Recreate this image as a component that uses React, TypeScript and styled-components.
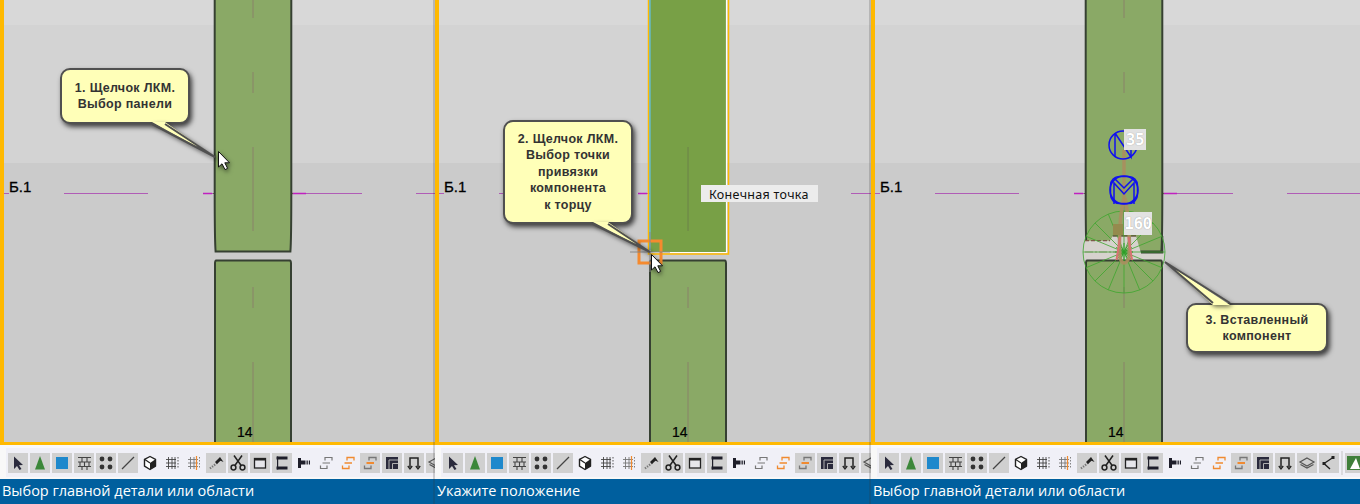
import React from "react";
import styled, { createGlobalStyle } from "styled-components";

const Global = createGlobalStyle`
  html, body { margin: 0; padding: 0; background: #cbcbcb; }
  #root { width: 1360px; height: 504px; overflow: hidden; }
`;

const Page = styled.div`
  display: flex;
  width: 1360px;
  height: 504px;
`;

const Pane = styled.section<{ $width: number; $seam?: boolean }>`
  position: relative;
  display: flex;
  flex-direction: column;
  width: ${(p) => p.$width}px;
  height: 504px;
  overflow: hidden;
  flex: none;
  &::after {
    content: ${(p) => (p.$seam ? '""' : "none")};
    position: absolute;
    top: 0;
    right: 0;
    bottom: 0;
    width: 2px;
    background: rgba(50, 50, 50, 0.2);
  }
`;

const Viewport = styled.div`
  position: relative;
  height: 445px;
  flex: none;
  overflow: hidden;
  background: linear-gradient(
    to bottom,
    #d8d8d8 0,
    #d8d8d8 25px,
    #d3d3d3 25px,
    #d3d3d3 163px,
    #cbcbcb 163px
  );
  &::after {
    content: "";
    position: absolute;
    inset: 0;
    border-left: 4px solid #ffb900;
    border-bottom: 3px solid #ffb900;
  }
`;

const Drawing = styled.svg`
  position: absolute;
  left: 0;
  top: 0;
`;

const AxisLabel = styled.span`
  position: absolute;
  left: 9px;
  top: 178px;
  font: 15px/18px "Liberation Sans", sans-serif;
  color: #000;
  -webkit-text-stroke: 0.3px #000;
`;

const GridNumber = styled.span`
  position: absolute;
  left: 237px;
  top: 424px;
  font: 14px/16px "Liberation Sans", sans-serif;
  color: #000;
  -webkit-text-stroke: 0.2px #000;
`;

const Callout = styled.div<{ $l: number; $t: number; $w: number; $h: number }>`
  position: absolute;
  left: ${(p) => p.$l}px;
  top: ${(p) => p.$t}px;
  width: ${(p) => p.$w}px;
  height: ${(p) => p.$h}px;
  box-sizing: border-box;
  display: flex;
  flex-direction: column;
  align-items: center;
  justify-content: center;
  background: #ffffb8;
  border: 2px solid #505050;
  border-radius: 10px;
  box-shadow: 2px 3px 5px rgba(0, 0, 0, 0.7);
  font: bold 12.5px/16.5px "Liberation Sans", sans-serif;
  letter-spacing: 0.3px;
  color: #333;
  text-align: center;
`;

const Tail = styled.svg`
  position: absolute;
  left: -2px;
  top: -2px;
  overflow: visible;
  filter: drop-shadow(2px 2px 2px rgba(0, 0, 0, 0.55));
`;

const Pointer = styled.svg<{ $x: number; $y: number }>`
  position: absolute;
  left: ${(p) => p.$x}px;
  top: ${(p) => p.$y}px;
  overflow: visible;
  filter: drop-shadow(1px 2px 2px rgba(0, 0, 0, 0.5));
`;

const SnapTip = styled.span`
  position: absolute;
  left: 266px;
  top: 185px;
  width: 117px;
  height: 17px;
  padding-left: 8px;
  box-sizing: border-box;
  background: #ececec;
  font: 12.5px/19px "Noto Sans", sans-serif;
  letter-spacing: 0.3px;
  color: #111;
  white-space: nowrap;
`;

const Dimension = styled.span<{ $t: number; $w: number; $h: number }>`
  position: absolute;
  left: 253px;
  top: ${(p) => p.$t}px;
  width: ${(p) => p.$w}px;
  height: ${(p) => p.$h}px;
  background: #e2e2e2;
  color: #fff;
  font: bold 16px/${(p) => p.$h}px "DejaVu Sans Mono", monospace;
  letter-spacing: -0.5px;
  text-shadow: 0 0 1px #888;
  text-align: center;
`;

const Toolbar = styled.div`
  height: 34px;
  flex: none;
  box-sizing: border-box;
  padding: 3px 0 2px 6px;
  background: #f8f8f8;
  overflow: hidden;
`;

const Strip = styled.div`
  display: flex;
  gap: 2px;
  height: 29px;
  box-sizing: border-box;
  padding: 5px 0 4px 2px;
  background: #f0f0f7;
`;

const ToolButton = styled.div<{ $on: boolean }>`
  flex: none;
  width: 20px;
  height: 20px;
  background: ${(p) => (p.$on ? "#d0d0d0" : "transparent")};
`;

const Separator = styled.div`
  flex: none;
  width: 2px;
  height: 24px;
  margin-top: -2px;
  background: #dadade;
`;

const StatusBar = styled.div`
  flex: 1;
  box-sizing: border-box;
  padding-left: 2px;
  background: #005f9e;
  color: #fff;
  font: 14.5px/24px "Open Sans", sans-serif;
  white-space: nowrap;
`;

const D = "#2a2a3c";
const G = "#777";
const O = "#f08a30";

const icons: React.ReactNode[] = [
  <path d="M6 3.5V16L9 13L11.5 17L13.5 16L11 12.3L15 12Z" fill={D} />,
  <path d="M10 3L15 16.5H5Z" fill="#3c873a" />,
  <rect x="4" y="4" width="12" height="12" fill="#1e88cc" />,
  <path d="M4 4.5H17M4 9H17M4 13.5H17M8 4.5V9M13 4.5V9M10.5 9V13.5M6 9V13.5M15 9V13.5M8 13.5V17M13 13.5V17" stroke="#444" strokeWidth="1.1" fill="none" />,
  <g fill="#333">
    <circle cx="6" cy="6" r="2.4" />
    <circle cx="14" cy="6" r="2.4" />
    <circle cx="6" cy="14" r="2.4" />
    <circle cx="14" cy="14" r="2.4" />
  </g>,
  <path d="M4 16L16 4" stroke="#444" strokeWidth="1.2" />,
  <g>
    <path d="M10 3.5L15.5 6.3V13.2L10 16.5L4.5 13.2V6.3Z" fill="#fff" stroke="#222" strokeWidth="1.4" strokeLinejoin="round" />
    <path d="M10 10L15.5 6.3V13.2L10 16.5Z" fill="#222" />
    <path d="M4.5 6.3L10 10" stroke="#222" strokeWidth="1.2" />
  </g>,
  <g stroke="#444" fill="none" strokeWidth="0.9">
    <path d="M4 6.5H14M4 10H14M4 13.5H14M6.5 4V16M10 4V16M13 4V16" />
    <path d="M16 4V16" strokeDasharray="1.5 1.5" />
  </g>,
  <g fill="none" strokeWidth="0.9">
    <path d="M4 6.5H14M4 10H14M4 13.5H14M6.5 4V16M10 4V16" stroke="#777" />
    <path d="M12.5 3V17" stroke={O} strokeWidth="1.2" />
    <path d="M15.5 4V16" stroke="#777" strokeDasharray="1.5 1.5" />
  </g>,
  <g>
    <path d="M4 15.5L11 10" stroke="#777" strokeWidth="2.2" strokeDasharray="1.3 1.3" fill="none" />
    <path d="M9 9L14 4L17.5 9L14.5 7.8L11 11Z" fill="#222" />
  </g>,
  <g fill="none" stroke="#222">
    <path d="M6 2.5L13.5 13M14 2.5L6.5 13" strokeWidth="1.5" />
    <circle cx="5.5" cy="14.5" r="2.4" strokeWidth="1.5" />
    <circle cx="14.5" cy="14.5" r="2.4" strokeWidth="1.5" />
  </g>,
  <g>
    <rect x="4.5" y="5.5" width="11" height="9.5" fill="#e6e6ea" stroke="#222" strokeWidth="1.3" />
    <path d="M4.5 6.5H15.5" stroke="#222" strokeWidth="2" />
  </g>,
  <g fill="#1e1e2a">
    <rect x="5" y="3.5" width="1.2" height="13" />
    <rect x="4.5" y="3.5" width="11" height="3" />
    <rect x="4.5" y="13.5" width="11" height="3" />
  </g>,
  <g fill="#1e1e2a">
    <rect x="4" y="5" width="3" height="10" />
    <rect x="4" y="7.5" width="7" height="4" />
    <rect x="11.5" y="7.5" width="1" height="4" />
    <rect x="13.2" y="7.5" width="1" height="4" />
    <rect x="15" y="7.5" width="1" height="4" />
  </g>,
  <path d="M9 7.5V4.5H16V7.5M4.5 12.5V15.5H11V12.5M6.5 10H14" stroke={G} strokeWidth="1.2" fill="none" />,
  <g fill="none" strokeWidth="1.3">
    <path d="M9 7.5V4.5H16V7.5M6.5 10H14" stroke={O} />
    <path d="M4.5 12.5V15.5H11V12.5" stroke={O} />
  </g>,
  <g fill="none" strokeWidth="1.3">
    <path d="M9 7.5V4.5H16V7.5" stroke="#777" />
    <path d="M6.5 10H14" stroke={O} strokeWidth="2" />
    <path d="M4.5 12.5V15.5H11V12.5" stroke="#777" />
  </g>,
  <g>
    <rect x="4" y="4" width="12" height="12" fill={D} />
    <path d="M7 16V7H16M10.5 16V10.5H16" stroke="#b0b0b0" fill="none" />
  </g>,
  <g fill="none" stroke="#222">
    <path d="M6 14V5H14V14" strokeWidth="1.5" />
    <path d="M3.8 13L6 16L8.2 13M11.8 13L14 16L16.2 13" strokeWidth="1.3" />
  </g>,
  <g fill="none" stroke="#555" strokeWidth="1.2">
    <path d="M10 5L17 9L10 13L3 9Z" />
    <path d="M3.5 11.5L10 15L16.5 11.5" />
  </g>,
  <g>
    <path d="M14 4.5L5 10.5L11 16" fill="none" stroke="#222" strokeWidth="1.4" />
    <rect x="12.5" y="3" width="3" height="3" fill="#222" />
    <rect x="3.5" y="9" width="3" height="3" fill="#222" />
  </g>,
  <g>
    <rect x="2" y="3" width="16" height="14" fill="#3f7f3a" />
    <path d="M5 16L11 5L15 16Z" fill="#fff" />
  </g>,
];

const plain = new Set([6, 7, 8, 13, 14, 15]);

function Tools({ count, split }: { count: number; split?: number }) {
  const items: React.ReactNode[] = [];
  for (let i = 0; i < count; i++) {
    if (split === i) items.push(<Separator key="sep" />);
    items.push(
      <ToolButton key={i} $on={!plain.has(i)}>
        <svg width="20" height="20" viewBox="0 0 20 20">
          {icons[i]}
        </svg>
      </ToolButton>
    );
  }
  return (
    <Toolbar>
      <Strip>{items}</Strip>
    </Toolbar>
  );
}

const PANEL = "#8aa966";
const EDGE = "#364032";
const DASH = "#8a8e68";
const GRID = "#a838b0";

const centreDashes = (
  <path
    d="M253 0V18M253 72V93M253 147V231M253 287V308M253 362V442"
    stroke={DASH}
    strokeWidth="1.4"
    fill="none"
  />
);

const upperPath = "M214.7 -3V193Q214.7 240 215.6 251.5H290.4Q291.3 240 291.3 193V-3Z";
const lowerPath = "M216 260.5H290Q291 261 291 263V446H215V263Q215 261 216 260.5Z";

function Grid({ width }: { width: number }) {
  return (
    <g>
      <path d={`M0 193.5H9M64 193.5H148M203 193.5H215M291 193.5H362M416 193.5H${width}`} stroke={GRID} strokeWidth="1" opacity="0.75" />
      <path d="M291 193.5H306M203 193.5H212" stroke="#c020c0" strokeWidth="1.6" />
      <path d="M213 193.5H224M279 193.5H293" stroke="#6b6650" strokeWidth="1" />
    </g>
  );
}

function Callouts({ l, t, w, h, base, tip, children }: {
  l: number; t: number; w: number; h: number;
  base: [number, number, number];
  tip: [number, number];
  children: React.ReactNode;
}) {
  const [a, b, y] = base;
  const inner = y > 0 ? y - 2 : y + 2;
  return (
    <Callout $l={l} $t={t} $w={w} $h={h}>
      <Tail width="1" height="1">
        <polygon points={`${a},${inner} ${b},${inner} ${tip[0]},${tip[1]}`} fill="#ffffb8" />
        <polyline points={`${a},${y} ${tip[0]},${tip[1]} ${b},${y}`} fill="none" stroke="#505050" strokeWidth="2" />
      </Tail>
      {children}
    </Callout>
  );
}

const Cursor = ({ x, y }: { x: number; y: number }) => (
  <Pointer $x={x} $y={y} width="13" height="20">
    <path d="M0.5 0.5V16L4 12.8L7 18.6L9.6 17.4L6.8 11.8H11.5Z" fill="#fff" stroke="#111" strokeWidth="1" />
  </Pointer>
);

const wheelSpokes = Array.from({ length: 16 }, (_, i) => {
  const a = (i * Math.PI) / 8;
  return `M253 252L${(253 + 41 * Math.cos(a)).toFixed(1)} ${(252 + 41 * Math.sin(a)).toFixed(1)}`;
}).join("");

const hubRays = Array.from({ length: 12 }, (_, i) => {
  const a = (i * Math.PI) / 6;
  return `M253 252L${(253 + 9 * Math.cos(a)).toFixed(1)} ${(252 + 9 * Math.sin(a)).toFixed(1)}`;
}).join("");

export default function App() {
  return (
    <Page>
      <Global />

      <Pane $width={435} $seam>
        <Viewport>
          <Drawing width="435" height="445">
            <Grid width={435} />
            <path d={upperPath} fill={PANEL} stroke={EDGE} strokeWidth="2" />
            <path d={lowerPath} fill={PANEL} stroke={EDGE} strokeWidth="2" />
            {centreDashes}
          </Drawing>
          <AxisLabel>Б.1</AxisLabel>
          <GridNumber>14</GridNumber>
          <Callouts l={60} t={68} w={130} h={56} base={[92, 105, 56]} tip={[155, 89]}>
            <div>1. Щелчок ЛКМ.</div>
            <div>Выбор панели</div>
          </Callouts>
          <Cursor x={218} y={151} />
        </Viewport>
        <Tools count={20} />
        <StatusBar>Выбор главной детали или области</StatusBar>
      </Pane>

      <Pane $width={436} $seam>
        <Viewport>
          <Drawing width="436" height="445">
            <Grid width={436} />
            <path d="M213.5 -3V254H293.5V-3" fill="none" stroke="#ffb900" strokeWidth="1.5" />
            <path d="M215 -3V252.5H291.5V-3" fill="#78a046" stroke="#fff" strokeWidth="1.2" />
            <path d="M215 -3V250" stroke="#2a9a9a" strokeWidth="1.2" />
            <path d="M253 147V231" stroke="#6f8a48" strokeWidth="1.4" />
            <path d={lowerPath} fill={PANEL} stroke={EDGE} strokeWidth="2" />
            <path d="M253 287V308M253 362V442" stroke={DASH} strokeWidth="1.4" />
            <rect x="204" y="241" width="22" height="22" fill="none" stroke="#f58a2e" strokeWidth="3" />
            <path d="M195 252H235M215 232V272" stroke="#888" strokeWidth="1" />
          </Drawing>
          <AxisLabel>Б.1</AxisLabel>
          <GridNumber>14</GridNumber>
          <SnapTip>Конечная точка</SnapTip>
          <Callouts l={68} t={120} w={130} h={104} base={[90, 105, 104]} tip={[147, 132]}>
            <div>2. Щелчок ЛКМ.</div>
            <div>Выбор точки</div>
            <div>привязки</div>
            <div>компонента</div>
            <div>к торцу</div>
          </Callouts>
          <Cursor x={216} y={254} />
        </Viewport>
        <Tools count={20} />
        <StatusBar>Укажите положение</StatusBar>
      </Pane>

      <Pane $width={489}>
        <Viewport>
          <Drawing width="489" height="445">
            <Grid width={489} />
            <path d={upperPath} fill={PANEL} stroke={EDGE} strokeWidth="2" />
            <polygon points="213,240.7 239,240.7 241.7,236 265,236 270,253 293,253 293,259.4 213,259.4" fill="#d6d2ce" />
            <path d="M291.3 236V252.5H270" fill="none" stroke={EDGE} strokeWidth="2" />
            <path d={lowerPath} fill={PANEL} stroke={EDGE} strokeWidth="2" />
            {centreDashes}
            <path d="M214 240.7H239" stroke="#7c5a48" strokeWidth="1.2" strokeDasharray="4 2" />
            <path d="M214 252H262" stroke="#b0a8a0" strokeWidth="1.5" strokeDasharray="8 2 2 2" />
            <path d="M241.7 236H265" stroke="#4c3e26" strokeWidth="1.2" />
            <g fill="none" stroke="#3ea62e" strokeWidth="1" opacity="0.8">
              <circle cx="253" cy="252" r="41" />
              <path d={wheelSpokes} />
            </g>
            <path d={hubRays} stroke="#2f9e28" strokeWidth="1" />
            <path
              d="M253 150V198C248 218 248 240 249 258Q253 268 258 258C259 240 258 218 254 198"
              fill="none"
              stroke="#a98f5e"
              strokeWidth="3.5"
              opacity="0.92"
            />
            <rect x="242" y="224" width="10" height="11" fill="#958a4e" />
            <path d="M249 237L245.5 260M257.5 237L261 260" stroke="#d87272" strokeWidth="2" />
            <g fill="none" stroke="#1010f0" strokeWidth="1.5">
              <circle cx="252" cy="145" r="14" />
              <path d="M244 133V157M244 133L260 157V133" />
              <circle cx="253" cy="190" r="14" />
              <rect x="239.5" y="176.5" width="27" height="27" rx="9" />
              <path d="M243 204V183L253 194L263 183V204" />
              <path d="M243 178L253 188L263 178" />
            </g>
          </Drawing>
          <AxisLabel>Б.1</AxisLabel>
          <GridNumber>14</GridNumber>
          <Dimension $t={129} $w={22} $h={21}>35</Dimension>
          <Dimension $t={212} $w={28} $h={23}>160</Dimension>
          <Callouts l={315} t={303} w={142} h={50} base={[27, 44, 0]} tip={[-21, -41]}>
            <div>3. Вставленный</div>
            <div>компонент</div>
          </Callouts>
        </Viewport>
        <Tools count={22} split={21} />
        <StatusBar>Выбор главной детали или области</StatusBar>
      </Pane>
    </Page>
  );
}
